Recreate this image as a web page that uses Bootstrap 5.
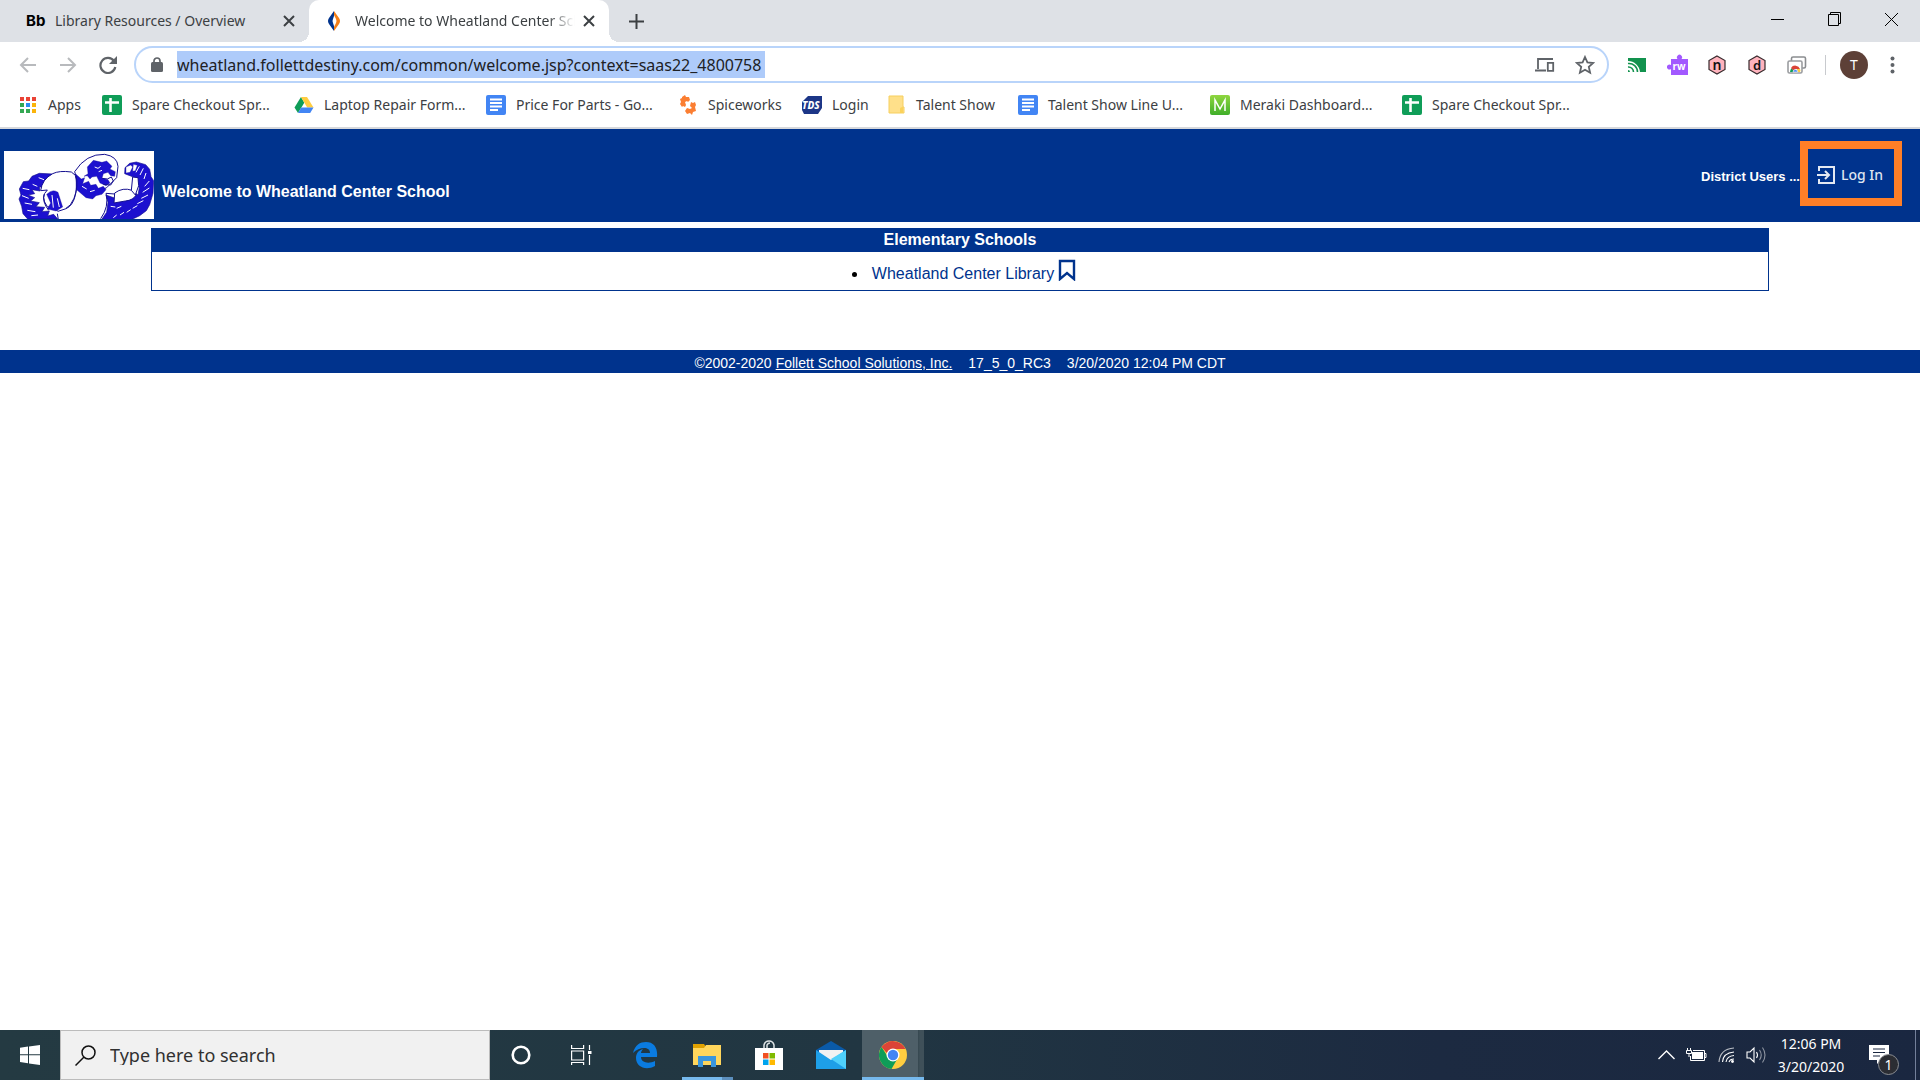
<!DOCTYPE html>
<html lang="en">
<head>
<meta charset="utf-8">
<meta name="viewport" content="width=device-width, initial-scale=1">
<title>Welcome to Wheatland Center School</title>
<link href="https://cdn.jsdelivr.net/npm/bootstrap@5.3.0/dist/css/bootstrap.min.css" rel="stylesheet">
<style>
:root{--navy:#00338d;--chrome:#dee1e6;--ink:#3c4043;--ui:"Noto Sans","Open Sans",sans-serif}
body{font-family:"Liberation Sans",Arial,sans-serif;background:#fff;color:#000;font-size:16px;line-height:20px}
button{background:none;border:0;padding:0;color:inherit}
svg{display:block;flex:none}
.ui-font{font-family:var(--ui);font-size:14px;color:var(--ink)}
.tabstrip{height:42px;background:var(--chrome)}
.tab-item{height:42px}
.tab-first{width:309px;padding:0 14px 0 26px}
.tab-live{width:300px;padding:0 14px 0 16px;background:#fff;border-radius:10px 10px 0 0;position:relative}
.tab-live::before,.tab-live::after{content:"";position:absolute;bottom:0;width:10px;height:10px}
.tab-live::before{left:-10px;background:radial-gradient(circle at 0 0,transparent 10px,#fff 10px)}
.tab-live::after{right:-10px;background:radial-gradient(circle at 100% 0,transparent 10px,#fff 10px)}
.bb-logo{font:bold 15px/20px Inter,sans-serif;color:#000;width:29px}
.tab-fade{-webkit-mask-image:linear-gradient(90deg,#000 88%,transparent);mask-image:linear-gradient(90deg,#000 88%,transparent)}
.win-btn{width:57px;height:38px}
.toolbar{height:45px;padding:0 8px}
.nav-btn{width:40px;height:40px}
.omnibox{height:37px;border:2px solid #b9d4fa;border-radius:19px;padding:0 12px 0 15px;margin-left:6px}
.url-box{width:588px;height:27px;border:0;padding:0;background:#aecbfa;color:#202124;font-size:16px;outline:0;margin-left:14px}
.avatar{width:28px;height:28px;border-radius:50%;background:#5d4037;color:#fff;font-size:14px}
.v-rule{width:1px;height:20px;background:#c8cace;margin:0 6px 0 8px}
.bookmarks{height:42px;padding:0 0 4px 18px;border-bottom:2px solid #d6d8dc}
.bookmarks a{color:var(--ink);white-space:nowrap;text-decoration:none;gap:10px}
.bm-long{width:192px}.bm-wide{width:132px}.bm-mid{width:124px}.bm-short{width:84px}
.banner{height:93px;background:var(--navy);color:#fff;padding:0 18px 3px 4px}
.site-name{font-size:16px;margin:0 0 18px 8px}
.district{font-size:13px;margin-top:6px}
.login-link{width:102px;height:65px;border:8px solid #ff7f27;color:#dfe5f0;font:500 14px/20px "Noto Sans",sans-serif;text-decoration:none;gap:6px;padding:2px 2px 0 0}
.login-area{margin-top:12px}
.school-panel{width:1618px;max-width:96%;border:1px solid var(--navy);margin:6px auto 59px}
.panel-title{height:23px;background:var(--navy);color:#fff;font-size:16px;line-height:22px}
.panel-body{height:38px;padding:5px 8px 0 0}
.panel-body a{color:var(--navy);text-decoration:none}
.site-foot{height:23px;background:var(--navy);color:#fff;font-size:14px;line-height:26px}
.site-foot a{color:#fff}
.taskbar{height:50px;background:linear-gradient(90deg,#243a42,#213642 45%,#1c2a41 75%,#1a2740);color:#fff;font-family:var(--ui)}
.start-btn{width:60px;height:50px}
.search-box{width:430px;height:50px;background:#f1f1f1;border:1px solid #bcbcbc;padding-left:14px;gap:14px}
.search-box input{border:0;background:none;color:#222;font-size:18px;outline:0;padding:0;min-width:0}
.search-box input::placeholder{color:#303030;opacity:1}
.task-btn{width:62px;height:50px}
.run-files{background:linear-gradient(90deg,#76b9ed 40px,#5c8fbd 40px) no-repeat 6px 100%/51px 3px}
.run-chrome{background:linear-gradient(#76b9ed,#76b9ed) no-repeat 0 100%/100% 3px,linear-gradient(90deg,#4e5f68 56px,#35474f 56px,#3f5059 58px)}
.tray-btn{width:30px;height:50px}
.clock{width:80px;font-size:14px;line-height:23px}
.note-btn{width:56px;height:50px}
.note-count{position:absolute;right:8px;bottom:5px;width:21px;height:21px;border-radius:50%;background:#2b2d33;border:1px solid #8a8d92;font-size:14px;line-height:19px}
.desk-edge{width:5px;height:50px;border-left:1px solid #73809a;margin-left:8px}
</style>
<script src="https://cdn.jsdelivr.net/npm/bootstrap@5.3.0/dist/js/bootstrap.bundle.min.js"></script>
</head>
<body class="d-flex flex-column min-vh-100">

<header class="ui-font">
  <div class="tabstrip d-flex align-items-center">
    <div class="tab-item tab-first d-flex align-items-center">
      <span class="bb-logo">Bb</span><span class="flex-grow-1">Library Resources / Overview</span>
      <button aria-label="Close tab"><svg width="12" height="12" viewBox="0 0 12 12" stroke="#3c4043" stroke-width="2"><path d="M1 1l10 10M11 1L1 11"/></svg></button>
    </div>
    <div class="tab-item tab-live d-flex align-items-center">
      <svg width="18" height="20" viewBox="0 0 18 20"><path d="M9 0L4 7q-2 3 0 6l5 7v-5l-1-3q-1-2 0-4l1-3z" fill="#00338d"/><path d="M9 0l5 7q2 3 0 6l-5 7v-4l2-4q1-2 0-4L9 4z" fill="#f57f17"/></svg>
      <span class="tab-fade flex-grow-1 overflow-hidden text-nowrap ms-2 ps-1 me-2">Welcome to Wheatland Center School</span>
      <button aria-label="Close tab"><svg width="12" height="12" viewBox="0 0 12 12" stroke="#3c4043" stroke-width="2"><path d="M1 1l10 10M11 1L1 11"/></svg></button>
    </div>
    <button class="ms-3 ps-1" aria-label="New tab"><svg width="15" height="15" viewBox="0 0 15 15" stroke="#3c4043" stroke-width="2"><path d="M7.500 0v15M0 7.500h15"/></svg></button>
    <div class="ms-auto d-flex align-self-start">
      <button class="win-btn d-flex align-items-center justify-content-center" aria-label="Minimize"><svg width="13" height="13" viewBox="0 0 13 13"><path d="M0 6.500h13" stroke="#000"/></svg></button>
      <button class="win-btn d-flex align-items-center justify-content-center" aria-label="Restore"><svg width="14" height="14" viewBox="0 0 14 14" fill="none" stroke="#000"><path d="M.5 2.500h10v11H.5zM2.500 2V.5h10v11H11"/></svg></button>
      <button class="win-btn d-flex align-items-center justify-content-center" aria-label="Close"><svg width="13" height="13" viewBox="0 0 13 13" stroke="#000"><path d="M0 0l13 13M13 0L0 13"/></svg></button>
    </div>
  </div>

  <div class="toolbar d-flex align-items-center">
    <button class="nav-btn d-flex align-items-center justify-content-center" aria-label="Back"><svg width="18" height="18" viewBox="0 0 18 18" fill="none" stroke="#b8babd" stroke-width="2"><path d="M17 9H2M9 2L2 9l7 7"/></svg></button>
    <button class="nav-btn d-flex align-items-center justify-content-center" aria-label="Forward"><svg width="18" height="18" viewBox="0 0 18 18" fill="none" stroke="#b8babd" stroke-width="2"><path d="M1 9h15M9 2l7 7-7 7"/></svg></button>
    <button class="nav-btn d-flex align-items-center justify-content-center" aria-label="Reload"><svg width="18" height="18" viewBox="0 0 18 18"><path d="M15 5A7.500 7.500 0 1 0 16.300 11" fill="none" stroke="#5f6368" stroke-width="2.200"/><path d="M18 0v8h-8z" fill="#5f6368"/></svg></button>
    <div class="omnibox flex-grow-1 d-flex align-items-center">
      <svg width="12" height="16" viewBox="0 0 12 16"><rect y="5" width="12" height="10" rx="1.500" fill="#5f6368"/><path d="M3 6V4a3 3 0 0 1 6 0v2" fill="none" stroke="#5f6368" stroke-width="1.700"/></svg>
      <input class="url-box" type="text" aria-label="Address" spellcheck="false" value="wheatland.follettdestiny.com/common/welcome.jsp?context=saas22_4800758">
      <button class="ms-auto me-3" aria-label="Send to your devices"><svg width="20" height="16" viewBox="0 0 20 16" fill="none" stroke="#5f6368" stroke-width="1.800"><path d="M18 2H3v10M0 13.500h11M12.800 5.800h5.400v8h-5.400z"/></svg></button>
      <button class="ms-1" aria-label="Bookmark this page"><svg width="20" height="20" viewBox="0 0 20 20"><path d="M10 2l2.400 5.400 5.800.6-4.400 3.900 1.300 5.800L10 14.700l-5.100 3 1.300-5.800L1.800 8l5.800-.6z" fill="none" stroke="#5f6368" stroke-width="1.800"/></svg></button>
    </div>
    <div class="d-flex align-items-center ms-2">
      <button class="nav-btn d-flex align-items-center justify-content-center" aria-label="Cast"><svg width="20" height="16" viewBox="0 0 20 16"><path d="M1 1h18v14h-6A12 12 0 0 0 1 4z" fill="#12924e"/><g fill="none" stroke="#12924e" stroke-width="1.600"><path d="M1 6.500A8.500 8.500 0 0 1 10.500 15M1 10a5 5 0 0 1 5.500 5"/></g><path d="M1 13a2 2 0 0 1 2 2H1z" fill="#12924e"/></svg></button>
      <button class="nav-btn d-flex align-items-center justify-content-center" aria-label="Read and write"><svg width="21" height="21" viewBox="0 0 21 21"><path d="M4 5h6.500a2.600 2.600 0 1 1 4 0H21v16H4v-6a2.500 2.500 0 1 1 0-4z" fill="#a259ff"/><text x="5.500" y="16" font-size="10" font-weight="700" fill="#fff">rw</text></svg></button>
      <button class="nav-btn d-flex align-items-center justify-content-center" aria-label="Extension n"><svg width="18" height="20" viewBox="0 0 18 20"><path d="M9 1l8 4.500v9L9 19l-8-4.500v-9z" fill="#ffb3bd" stroke="#372a2d" stroke-width="1.200"/><text x="9" y="14.500" text-anchor="middle" font-size="14" font-weight="600" fill="#111">n</text></svg></button>
      <button class="nav-btn d-flex align-items-center justify-content-center" aria-label="Extension d"><svg width="18" height="20" viewBox="0 0 18 20"><path d="M9 1l8 4.500v9L9 19l-8-4.500v-9z" fill="#ffb3bd" stroke="#372a2d" stroke-width="1.200"/><text x="9" y="14.500" text-anchor="middle" font-size="13" font-weight="600" fill="#111">d</text></svg></button>
      <button class="nav-btn d-flex align-items-center justify-content-center" aria-label="Web store launcher"><svg width="20" height="18" viewBox="0 0 20 18"><rect x="4.500" y="1" width="14" height="11" rx="1.500" fill="#fff" stroke="#8b8d90" stroke-width="1.600"/><rect x="1" y="5" width="14" height="12" rx="1.500" fill="#fff" stroke="#9b9da0" stroke-width="1.600"/><path d="M3 16a5 5 0 0 1 2-4l2 4z" fill="#0f9d58"/><path d="M4 12a5 5 0 0 1 9 1H8l-1 2z" fill="#db4437"/><path d="M10 13h3q1 1.500 0 3h-3z" fill="#ffcd40"/><path d="M6 16a2.400 2.400 0 0 1 4.800 0z" fill="#4285f4" stroke="#fff" stroke-width=".6"/></svg></button>
      <span class="v-rule"></span>
      <button class="avatar ms-2" aria-label="Profile">T</button>
      <button class="nav-btn d-flex align-items-center justify-content-center ms-1" aria-label="Menu"><svg width="5" height="18" viewBox="0 0 5 18" fill="#5f6368"><circle cx="2.500" cy="2.500" r="2"/><circle cx="2.500" cy="9" r="2"/><circle cx="2.500" cy="15.500" r="2"/></svg></button>
    </div>
  </div>

  <nav class="bookmarks d-flex align-items-center" aria-label="Bookmarks">
    <a href="#" class="bm-short d-flex align-items-center"><svg width="20" height="20" viewBox="0 0 20 20"><path d="M2 2h4v4H2zM8 2h4v4H8zM14 2h4v4h-4z" fill="#ea4335"/><path d="M2 8h4v4H2zM2 14h4v4H2z" fill="#34a853"/><path d="M8 8h4v4H8z" fill="#2b8cf0"/><path d="M14 8h4v4h-4zM14 14h4v4h-4z" fill="#fbb40a"/><path d="M8 14h4v4H8z" fill="#34a853"/></svg>Apps</a>
    <a href="#" class="bm-long d-flex align-items-center"><svg width="20" height="20" viewBox="0 0 20 20"><rect width="20" height="20" rx="2" fill="#0f9d58"/><path d="M3 7.500h14M8.500 3v14" stroke="#fff" stroke-width="2.600"/></svg>Spare Checkout Spr...</a>
    <a href="#" class="bm-long d-flex align-items-center"><svg width="20" height="20" viewBox="0 0 20 20"><path d="M7 2l3.300 5.800L4 18 .5 12.500z" fill="#0f9d58"/><path d="M7 2h6l6.500 10.500h-6.300z" fill="#ffcd40"/><path d="M7.200 12.500h12.300L16.200 18H4z" fill="#4285f4"/></svg>Laptop Repair Form...</a>
    <a href="#" class="bm-long d-flex align-items-center"><svg width="20" height="20" viewBox="0 0 20 20"><rect width="20" height="20" rx="2" fill="#4285f4"/><path d="M4 4.500h12M4 8h12M4 11.500h12M4 15h8" stroke="#fff" stroke-width="1.800"/></svg>Price For Parts - Go...</a>
    <a href="#" class="bm-mid d-flex align-items-center"><svg width="20" height="20" viewBox="0 0 20 20" fill="#fb7e32"><path d="M7 0l1 2h3l1 3-2 2-1-1-2 1 1 3-1 2-2-1-1 1-2-3 1-2-1-3 2-1V2z"/><path d="M13 7l2 1 2-1 1 3-1 2 1 4-3 1-1 3-2-2-3 1-2-3 2-3 3 1 2-1-2-2z"/></svg>Spiceworks</a>
    <a href="#" class="bm-short d-flex align-items-center"><svg width="20" height="20" viewBox="0 0 20 20"><path d="M6 1h14v12l-4 6H2l-2-4V7z" fill="#1c3687"/><text x="0" y="14" font-size="10" font-weight="800" font-style="italic" fill="#fff">TDS</text></svg>Login</a>
    <a href="#" class="bm-wide d-flex align-items-center"><svg width="20" height="20" viewBox="0 0 20 20"><path d="M3 1h14v11h1v6H3z" fill="#ffe08a" stroke="#f6cf5e"/><path d="M14 18v-4q0-2 3-2v6z" fill="#fbd25a"/></svg>Talent Show</a>
    <a href="#" class="bm-long d-flex align-items-center"><svg width="20" height="20" viewBox="0 0 20 20"><rect width="20" height="20" rx="2" fill="#4285f4"/><path d="M4 4.500h12M4 8h12M4 11.500h12M4 15h8" stroke="#fff" stroke-width="1.800"/></svg>Talent Show Line U...</a>
    <a href="#" class="bm-long d-flex align-items-center"><svg width="20" height="20" viewBox="0 0 20 20"><defs><linearGradient id="mk" x2="0" y2="1"><stop stop-color="#8fd63f"/><stop offset="1" stop-color="#3fae29"/></linearGradient></defs><rect width="20" height="20" rx="2" fill="url(#mk)"/><path d="M5 16V5l5 9 5-9v11" fill="none" stroke="#fff" stroke-width="1.500"/></svg>Meraki Dashboard...</a>
    <a href="#" class="bm-long d-flex align-items-center"><svg width="20" height="20" viewBox="0 0 20 20"><rect width="20" height="20" rx="2" fill="#0f9d58"/><path d="M3 7.500h14M8.500 3v14" stroke="#fff" stroke-width="2.600"/></svg>Spare Checkout Spr...</a>
  </nav>
</header>

<main class="flex-grow-1">
  <div class="banner d-flex">
    <svg class="align-self-end" width="150" height="68" viewBox="12 18 450 204" role="img" aria-label="School mascot">
      <rect x="12" y="18" width="450" height="204" fill="#fff"/>
      <g fill="#1c10cf" stroke="#15108f" stroke-width="2">
        <path d="M158 87l-40-2-22 9-10 14-16 2-12 22 5 18-6 12 8 22 4 22 14 16h90l-12-14-18 5 5-15-22 2 8-13-26-2 10-12-26-5 12-10-20-8 20-4-8-12 24 4-2-13 18 5 4-12 16 3z"/>
        <path d="M306 222l14-20 4-30-6-22 28 10 40-8 14-14 14 12 4-22-14-18-4-14-26-10 1-18 14-13 20-4 28 8 12 14 4 22 8 12-2 38-10 34-10 18-20 15-25 12-10 8z"/>
      </g>
      <g fill="#fff" stroke="#15108f" stroke-width="3">
        <path d="M158 86q20-10 56-5l12 10q8 26 0 60-8 32-28 40l-24 8-12-10-20-4q-22-30 0-50l-20 2q4-34 36-51z"/>
        <path d="M224 80q34-54 90-52 38 6 40 36l-4 34-30 30-40 18-40-10z"/>
        <path d="M344 144q25-18 52-8l14 12q-10 18-34 20l-34 6z"/>
        <path d="M398 96l-4 40 12 14 10-28-2-24z"/>
        <path d="M232 142q40 28 78 8 12 30 4 54l-16 20H186q20-14 34-34 14-20 12-48z" stroke="none"/>
        <path d="M378 66l14-6 6 6-8 16-12 2zM400 58l12 3-6 16-8 2z" stroke-width="1"/>
      </g>
      <g fill="#1c10cf" stroke="#15108f">
        <path d="M228 88l16 14 10-4-6 18 18-7 6 12 16-3 7 12 15-6 8 10-12 14-18 4-10 10-20-4-20-17-10-8z"/>
        <path d="M262 66l18-20 26 6 14-4 16 16-6 8 16 8-2 14-12-2-8-10-14 4-4 14 18 4 6 10-12 8-18-8-10-20-14 2-6 6-8-10-10 2 12-8z"/>
        <path d="M140 148q18-18 34-6l14 44-20 12-26-6 10-18z"/>
      </g>
      <g fill="none" stroke="#fff" stroke-width="3">
        <path d="M284 66l10 4 8-6M296 80l10-4M246 124l14 8M270 140l14-4M156 150l4 38M172 160l6 26M408 82l10-18M420 90l10-20M432 102l6-18M434 124l14-16M428 142l20-13M424 160l20-10M412 176l18-9M398 190l14-8M380 202l12-8M360 210l12-8M340 218l10-8M332 184l14 2M350 190l14-6M68 130l20 4M66 152l20 8M74 174l22 4M82 196l24 4M94 212l20-2M98 118l14 6M116 98l16 6"/>
      </g>
      <path d="M228 92q8 30-6 68-10 24-24 30M132 148q-6 22 14 48M172 206l3 18M318 145q10 40-16 76M318 145l26 2M306 100l16 2 12-6 6 12-8 12-22-2" fill="none" stroke="#15108f" stroke-width="3"/>
    </svg>
    <h1 class="site-name fw-bold align-self-end">Welcome to Wheatland Center School</h1>
    <div class="login-area ms-auto align-self-start d-flex align-items-center">
      <strong class="district">District Users ...</strong>
      <a href="#" class="login-link d-flex align-items-center justify-content-center"><svg width="18" height="18" viewBox="0 0 18 18" fill="none" stroke="#e4e9f2" stroke-width="2"><path d="M2 5V1h15v16H2v-4M0 9h12M8 5l4 4-4 4"/></svg>Log In</a>
    </div>
  </div>

  <section class="school-panel">
    <h2 class="panel-title fw-bold text-center m-0">Elementary Schools</h2>
    <div class="panel-body d-flex justify-content-center align-items-center">
      <ul class="m-0"><li class="ps-1"><a href="#" class="d-flex align-items-center">Wheatland Center Library<svg class="ms-1 mb-2" width="18" height="22" viewBox="0 0 18 22" fill="none" stroke="#00338d" stroke-width="2.400"><path d="M2 2h14v18l-7-6-7 6z"/></svg></a></li></ul>
    </div>
  </section>

  <footer class="site-foot d-flex justify-content-center"><span class="me-1">©2002-2020</span><a href="#">Follett School Solutions, Inc.</a><span class="mx-3 px-0">17_5_0_RC3</span><span>3/20/2020 12:04 PM CDT</span></footer>
</main>

<div class="taskbar d-flex align-items-center">
  <button class="start-btn d-flex align-items-center justify-content-center" aria-label="Start"><svg width="20" height="20" viewBox="0 0 20 20" fill="#fff"><path d="M0 2.800l8-1.200v7.600H0zM9 1.400L20 0v9.200H9zM0 10.300h8v7.900L0 17zM9 10.300h11V20L9 18.400z"/></svg></button>
  <label class="search-box d-flex align-items-center"><svg width="21" height="21" viewBox="0 0 21 21" fill="none" stroke="#111" stroke-width="1.500"><circle cx="13.500" cy="7.500" r="6.500"/><path d="M9 12l-8.500 8.500"/></svg><input class="flex-grow-1" type="text" placeholder="Type here to search" aria-label="Type here to search"></label>
  <button class="task-btn d-flex align-items-center justify-content-center" aria-label="Cortana"><svg width="20" height="20" viewBox="0 0 20 20"><circle cx="10" cy="10" r="8.300" fill="none" stroke="#fff" stroke-width="2.600"/></svg></button>
  <button class="task-btn d-flex align-items-center justify-content-center pe-1" aria-label="Task View"><svg width="21" height="20" viewBox="0 0 21 20" fill="none" stroke="#fff" stroke-width="1.200"><path d="M.6 6h12v9H.6zM.6 0v3.500h12V0M.6 20v-2.500h12V20M18.500 0v5M18.500 10v10"/><path d="M17 6h3.500v3H17z" fill="#fff" stroke="none"/></svg></button>
  <button class="task-btn d-flex align-items-center justify-content-center" aria-label="Edge"><svg width="26" height="28" viewBox="0 0 26 28"><path d="M1 12C3 4 8 1 14 1c8 0 12 6 11 15H9c0 6 8 7 14 4v5c-9 5-19 1-19-8 0-5 3-8 7-9-1 1-2 3-2 4h9C18 5 7 6 1 12z" fill="#0a7be0"/></svg></button>
  <button class="task-btn run-files d-flex align-items-center justify-content-center" aria-label="File Explorer"><svg width="28" height="24" viewBox="0 0 28 24"><path d="M0 1h11l2 3-2 2H0z" fill="#e0a100"/><path d="M0 5h11l2-3h15v20H0z" fill="#ffd65c"/><path d="M5 24V13h18v11h-5v-6h-8v6z" fill="#3a96dd"/></svg></button>
  <button class="task-btn d-flex align-items-center justify-content-center" aria-label="Microsoft Store"><svg width="30" height="30" viewBox="0 0 30 30"><path d="M10 8V5q1-4 5-4t5 4v3M13 8V5q1-2 3-2" fill="none" stroke="#dde2e4" stroke-width="1.500"/><path d="M1 8h28v22H1z" fill="#fff"/><path d="M9 13h5.500v5.500H9z" fill="#f25022"/><path d="M15.500 13H21v5.500h-5.500z" fill="#7fba00"/><path d="M9 19.500h5.500V25H9z" fill="#00a4ef"/><path d="M15.500 19.500H21V25h-5.500z" fill="#ffb900"/></svg></button>
  <button class="task-btn d-flex align-items-center justify-content-center" aria-label="Mail"><svg width="30" height="28" viewBox="0 0 30 28"><path d="M0 9l15-9 15 9v4H0z" fill="#0a5aa8"/><path d="M3 9h24v6L15 20 3 15z" fill="#f2f2f2"/><path d="M0 9l15 10L30 9v19H0z" fill="#1e9fe8"/><path d="M30 9v19L15 18z" fill="#4fd0fb"/></svg></button>
  <button class="task-btn run-chrome d-flex align-items-center justify-content-center" aria-label="Google Chrome"><svg width="28" height="28" viewBox="0 0 28 28"><circle cx="14" cy="14" r="14" fill="#ffcd40"/><path d="M14 14h-4.500L2.500 6A14 14 0 0 1 26.500 8H14z" fill="#db4437"/><path d="M2.500 6A14 14 0 0 0 12.500 28l6-10.500L9 16z" fill="#0f9d58"/><circle cx="14" cy="14" r="6.500" fill="#fff"/><circle cx="14" cy="14" r="5.200" fill="#4285f4"/></svg></button>

  <div class="ms-auto d-flex align-items-center">
    <button class="tray-btn d-flex align-items-center justify-content-center" aria-label="Show hidden icons"><svg width="17" height="10" viewBox="0 0 17 10" fill="none" stroke="#fff" stroke-width="1.400"><path d="M.5 9l8-8 8 8"/></svg></button>
    <button class="tray-btn d-flex align-items-center justify-content-center" aria-label="Battery"><svg width="21" height="14" viewBox="0 0 21 14" fill="none" stroke="#fff"><path d="M7 2.500h11.500v10H4.500V8M18.500 5.500h1.500v4h-1.500M.5 2.500h5v3h-5zM1.500 0v2M4.500 0v2M3 6v3"/><path d="M6 4h11v7H6z" fill="#fff" stroke="none"/></svg></button>
    <button class="tray-btn d-flex align-items-center justify-content-center" aria-label="Wi-Fi"><svg width="17" height="16" viewBox="0 0 17 16" fill="none" stroke="#fff" stroke-width="1.100"><path d="M1 15Q2 2 16 1" opacity=".7"/><path d="M4.500 15Q5 6 16 5M8 15q1-6 8-6.500M11 15q1-3 5-3"/><circle cx="14.500" cy="14.500" r="1.400" fill="#fff" stroke="none"/></svg></button>
    <button class="tray-btn d-flex align-items-center justify-content-center" aria-label="Volume"><svg width="21" height="18" viewBox="0 0 21 18" fill="none" stroke="#fff" stroke-width="1.100"><path d="M1 6h3l4-4v14l-4-4H1zM10.500 6q2 3 0 6"/><path d="M13.500 4q3.500 5 0 10M16.500 1.500q5 7.500 0 15" opacity=".5"/></svg></button>
    <div class="clock text-center">12:06 PM<br>3/20/2020</div>
    <button class="note-btn position-relative d-flex align-items-center justify-content-center" aria-label="Notifications"><svg width="20" height="20" viewBox="0 0 20 20"><path d="M0 0h20v15h-8l-4 4v-4H0z" fill="#fff"/><path d="M4 4h12M4 7.500h12M4 11h7" stroke="#1a2740" stroke-width="1.200"/></svg><span class="note-count">1</span></button>
    <span class="desk-edge"></span>
  </div>
</div>
</body>
</html>
